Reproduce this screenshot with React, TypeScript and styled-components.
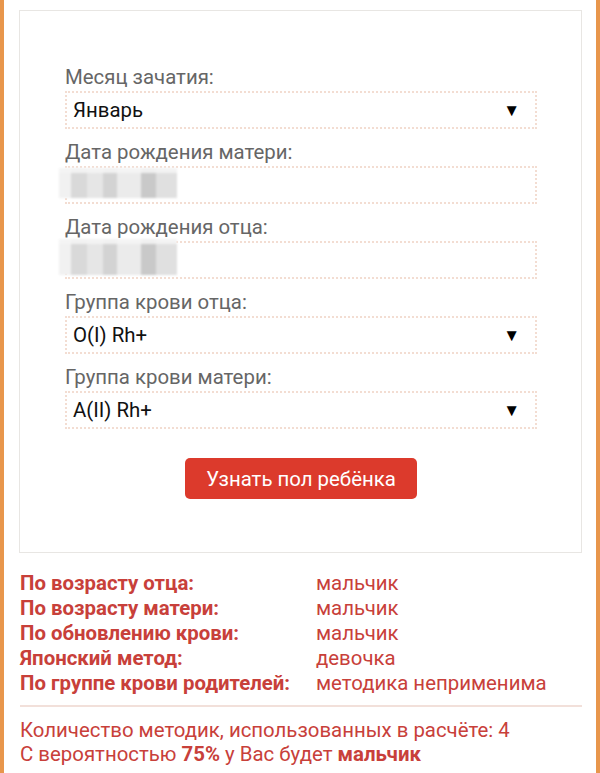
import React from "react";
import styled, { createGlobalStyle } from "styled-components";

const Global = createGlobalStyle`
  html, body { margin: 0; padding: 0; background: #fff; }
  body { font-family: Roboto, "Noto Sans", Arial, sans-serif; }
`;

const Page = styled.div`
  box-sizing: border-box;
  min-height: 773px;
  border-left: 4px solid #e8964c;
  border-right: 4px solid #e8964c;
  padding: 10px 14px 0 15px;
`;

const Card = styled.form`
  border: 1px solid #e8e6e3;
  padding: 55px 44px 53px 45px;
  display: flex;
  flex-direction: column;
`;

const Group = styled.div`
  display: flex;
  flex-direction: column;
  & + & {
    margin-top: 12px;
  }
`;

const Label = styled.label`
  font-size: 20.4px;
  line-height: 22px;
  color: #666;
  margin-bottom: 3px;
`;

const Field = styled.div`
  box-sizing: border-box;
  height: 38px;
  border: 2px dotted #f3ddd2;
  display: flex;
  align-items: center;
  justify-content: space-between;
  padding: 0 15px 0 6px;
  font-size: 20.4px;
  color: #111;
  position: relative;
`;

const Arrow = styled.span`
  font-size: 17px;
  color: #000;
`;

const Mosaic = styled.div<{ $top: number; $h: number }>`
  position: absolute;
  left: -8px;
  top: ${(p) => p.$top}px;
  width: 118px;
  height: ${(p) => p.$h}px;
  background:
    linear-gradient(180deg, rgba(245,245,245,0.9) 0 5px, transparent 5px),
    linear-gradient(90deg,
      #f1f1f1 0 12px,
      #d9d9d9 12px 28px,
      #e6e6e6 28px 44px,
      #d3d3d3 44px 58px,
      #ebebeb 58px 82px,
      #c9c9c9 82px 97px,
      #e0e0e0 97px 118px);
  filter: blur(1px);
`;

const Button = styled.button`
  align-self: center;
  margin-top: 29px;
  width: 232px;
  height: 41px;
  border: none;
  border-radius: 5px;
  background: #dc3a2c;
  color: #fff;
  font-family: Roboto, "Noto Sans", Arial, sans-serif;
  font-size: 20.4px;
`;

const Results = styled.div`
  margin-top: 18px;
  padding-left: 1px;
  display: grid;
  grid-template-columns: 296px 1fr;
  font-size: 20.4px;
  line-height: 25px;
  color: #c8403a;
`;

const Key = styled.div`
  font-weight: 700;
`;

const Value = styled.div``;

const Divider = styled.hr`
  margin: 9px 0 11px 1px;
  border: none;
  height: 2px;
  background: #f2e0da;
`;

const Summary = styled.div`
  padding-left: 1px;
  font-size: 20.4px;
  line-height: 24px;
  color: #c8403a;
  b {
    font-weight: 700;
  }
`;

const fields = [
  { label: "Месяц зачатия:", value: "Январь", select: true },
  { label: "Дата рождения матери:", value: "", mosaic: [0, 30] as [number, number] },
  { label: "Дата рождения отца:", value: "", mosaic: [-4, 36] as [number, number] },
  { label: "Группа крови отца:", value: "O(I) Rh+", select: true },
  { label: "Группа крови матери:", value: "A(II) Rh+", select: true },
];

const results = [
  ["По возрасту отца:", "мальчик"],
  ["По возрасту матери:", "мальчик"],
  ["По обновлению крови:", "мальчик"],
  ["Японский метод:", "девочка"],
  ["По группе крови родителей:", "методика неприменима"],
];

export default function App() {
  return (
    <>
      <Global />
      <Page>
        <Card onSubmit={(e) => e.preventDefault()}>
          {fields.map((f) => (
            <Group key={f.label}>
              <Label>{f.label}</Label>
              <Field>
                <span>{f.value}</span>
                {f.select && <Arrow>▼</Arrow>}
                {f.mosaic && <Mosaic $top={f.mosaic[0]} $h={f.mosaic[1]} />}
              </Field>
            </Group>
          ))}
          <Button type="submit">Узнать пол ребёнка</Button>
        </Card>
        <Results>
          {results.map(([k, v]) => (
            <React.Fragment key={k}>
              <Key>{k}</Key>
              <Value>{v}</Value>
            </React.Fragment>
          ))}
        </Results>
        <Divider />
        <Summary>
          Количество методик, использованных в расчёте: 4
          <br />
          С вероятностью <b>75%</b> у Вас будет <b>мальчик</b>
        </Summary>
      </Page>
    </>
  );
}
